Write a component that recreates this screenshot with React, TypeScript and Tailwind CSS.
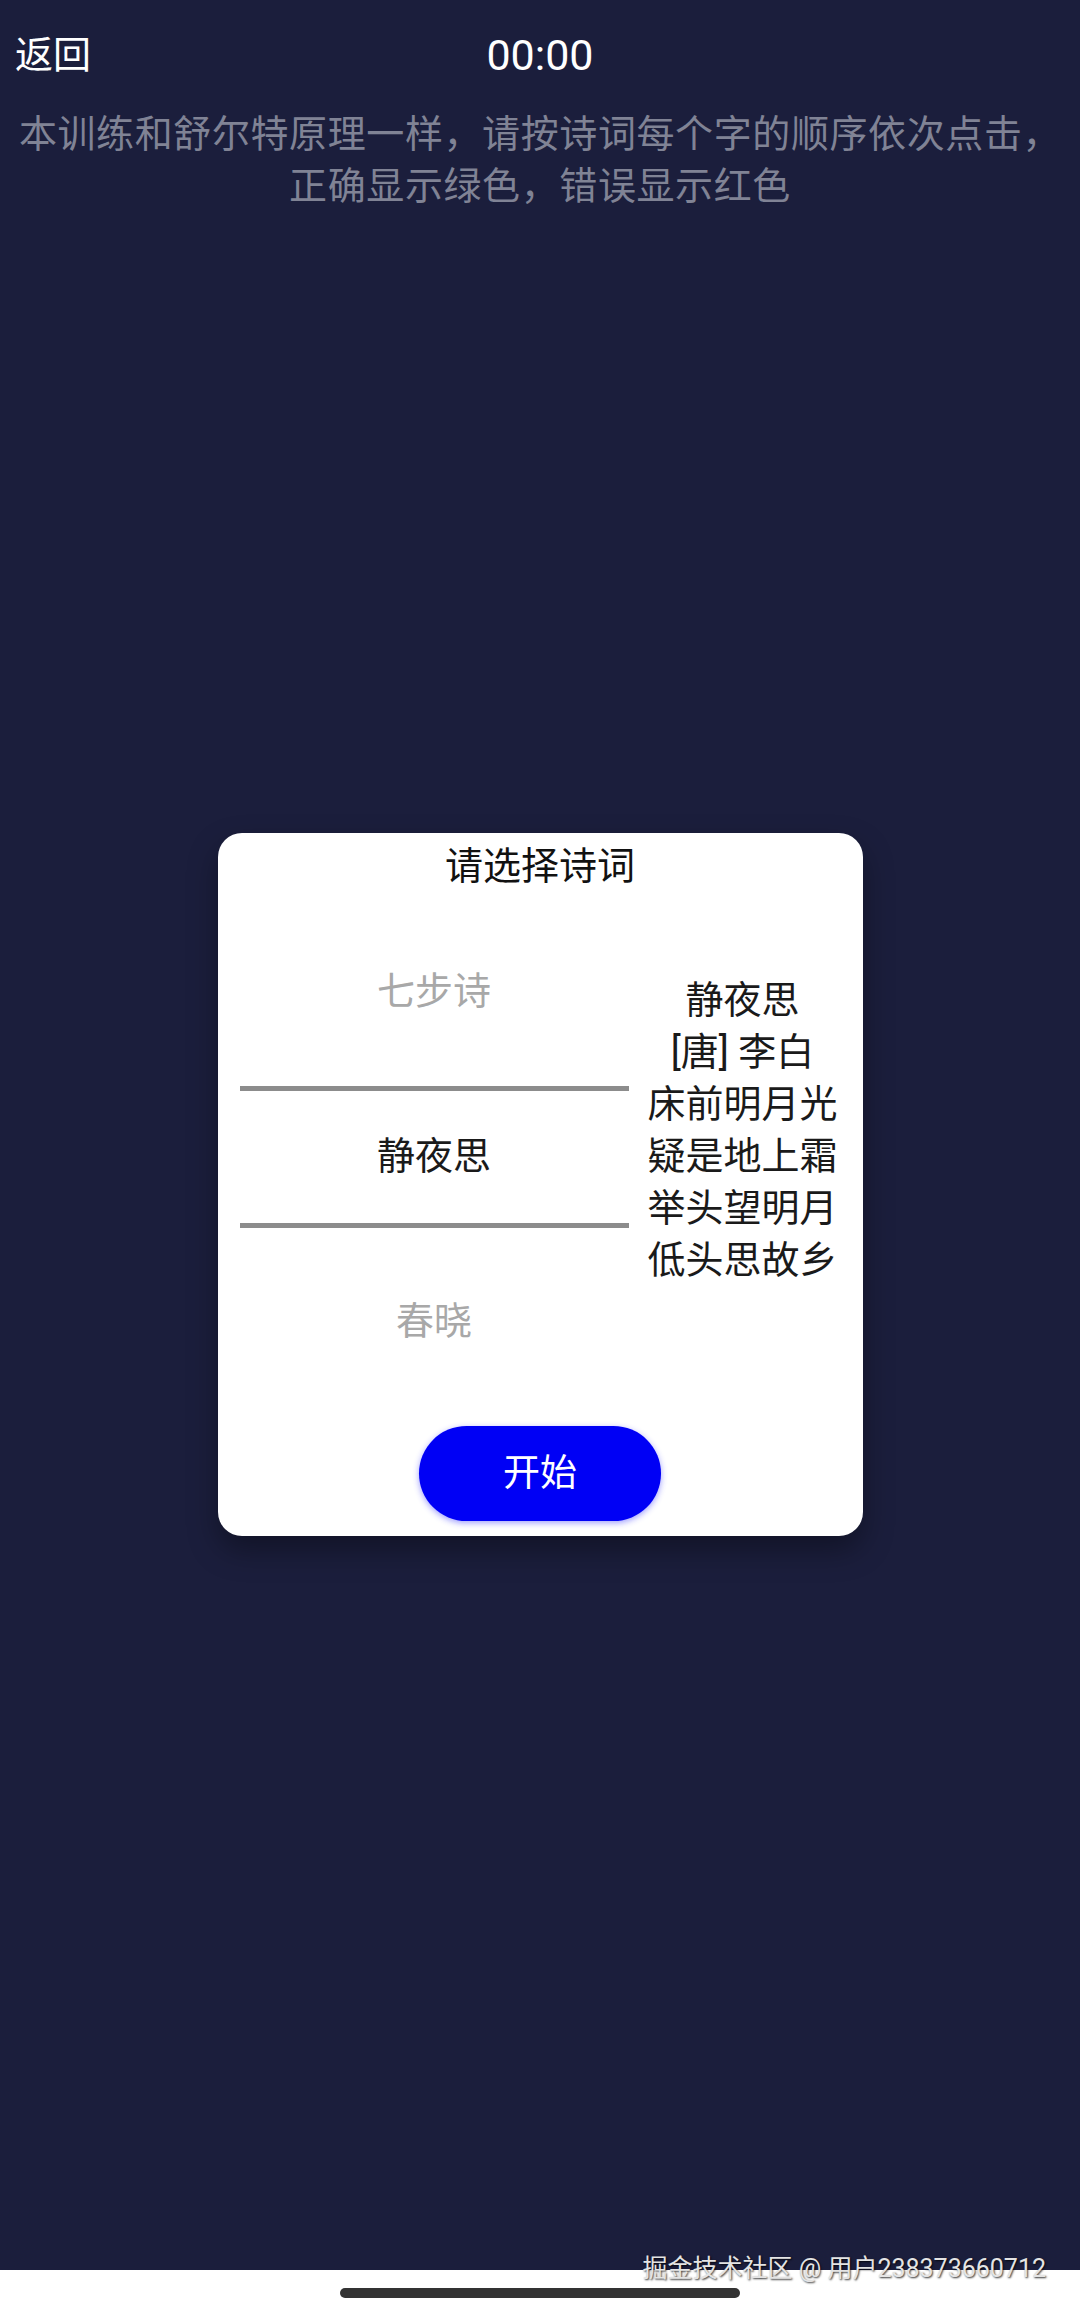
import React from "react";

const FONT = "font-['Roboto','Noto_Sans_CJK_SC',sans-serif]";

const POEM_LINES = ["静夜思", "[唐] 李白", "床前明月光", "疑是地上霜", "举头望明月", "低头思故乡"];

function PoemPicker() {
  const items = [
    { label: "七步诗", active: false },
    { label: "静夜思", active: true },
    { label: "春晓", active: false },
  ];
  return (
    <div className="relative w-[389px] shrink-0">
      {items.map((item) => (
        <div
          key={item.label}
          className={`flex h-[165px] items-center justify-center text-[38px] leading-[52px] ${
            item.active ? "text-[#1a1a1a]" : "text-[#a8a8a8]"
          }`}
        >
          {item.label}
        </div>
      ))}
      {/* divider lines of the selected row */}
      <div className="absolute left-0 right-0 top-[178px] h-[5px] bg-[#8c8c8c]" />
      <div className="absolute left-0 right-0 top-[315px] h-[5px] bg-[#8c8c8c]" />
    </div>
  );
}

function SelectDialog() {
  return (
    <div className="mx-auto mt-[621px] w-[645px] rounded-[24px] bg-white pb-[15px] pt-[7px] shadow-[0_14px_30px_rgba(0,0,0,0.35)]">
      <h2 className="text-center text-[38px] leading-[52px] font-normal text-[#111]">请选择诗词</h2>
      <div className="mt-[16px] flex pl-[22px] pr-[6px]">
        <PoemPicker />
        <div className="mt-[66px] flex-1 text-center text-[38px] leading-[52px] text-[#1a1a1a]">
          {POEM_LINES.map((line) => (
            <div key={line} className="whitespace-nowrap">
              {line}
            </div>
          ))}
        </div>
      </div>
      <button className="mx-auto mt-[23px] flex h-[95px] w-[242px] items-center justify-center rounded-full bg-[#0000f5] text-[37px] text-white shadow-[0_2px_6px_rgba(40,40,255,0.45)]">
        开始
      </button>
    </div>
  );
}

export default function App() {
  return (
    <div className={`flex h-[2315px] w-[1080px] flex-col ${FONT}`}>
      <div className="relative h-[2270px] bg-[#1b1e3c]">
        {/* header */}
        <div className="grid grid-cols-3 items-center px-[15px] pt-[28px] text-[38px] leading-[54px] text-white">
          <span>返回</span>
          <span className="text-center text-[43px]">00:00</span>
          <span />
        </div>

        <p className="mt-[26px] px-[12px] text-center text-[38px] leading-[52px] tracking-[0.6px] text-[#808395]">
          本训练和舒尔特原理一样，请按诗词每个字的顺序依次点击，
          <br />
          正确显示绿色，错误显示红色
        </p>

        <SelectDialog />

        {/* watermark */}
        <div className="absolute bottom-[-18px] right-[34px] text-[25px] leading-[38px] text-[#e4e4e4] [text-shadow:1px_1px_2px_rgba(0,0,0,0.8)]">
          掘金技术社区 @ 用户238373660712
        </div>
      </div>
      <div className="flex flex-1 items-center justify-center bg-white">
        <div className="h-[10px] w-[400px] rounded-full bg-[#333]" />
      </div>
    </div>
  );
}
